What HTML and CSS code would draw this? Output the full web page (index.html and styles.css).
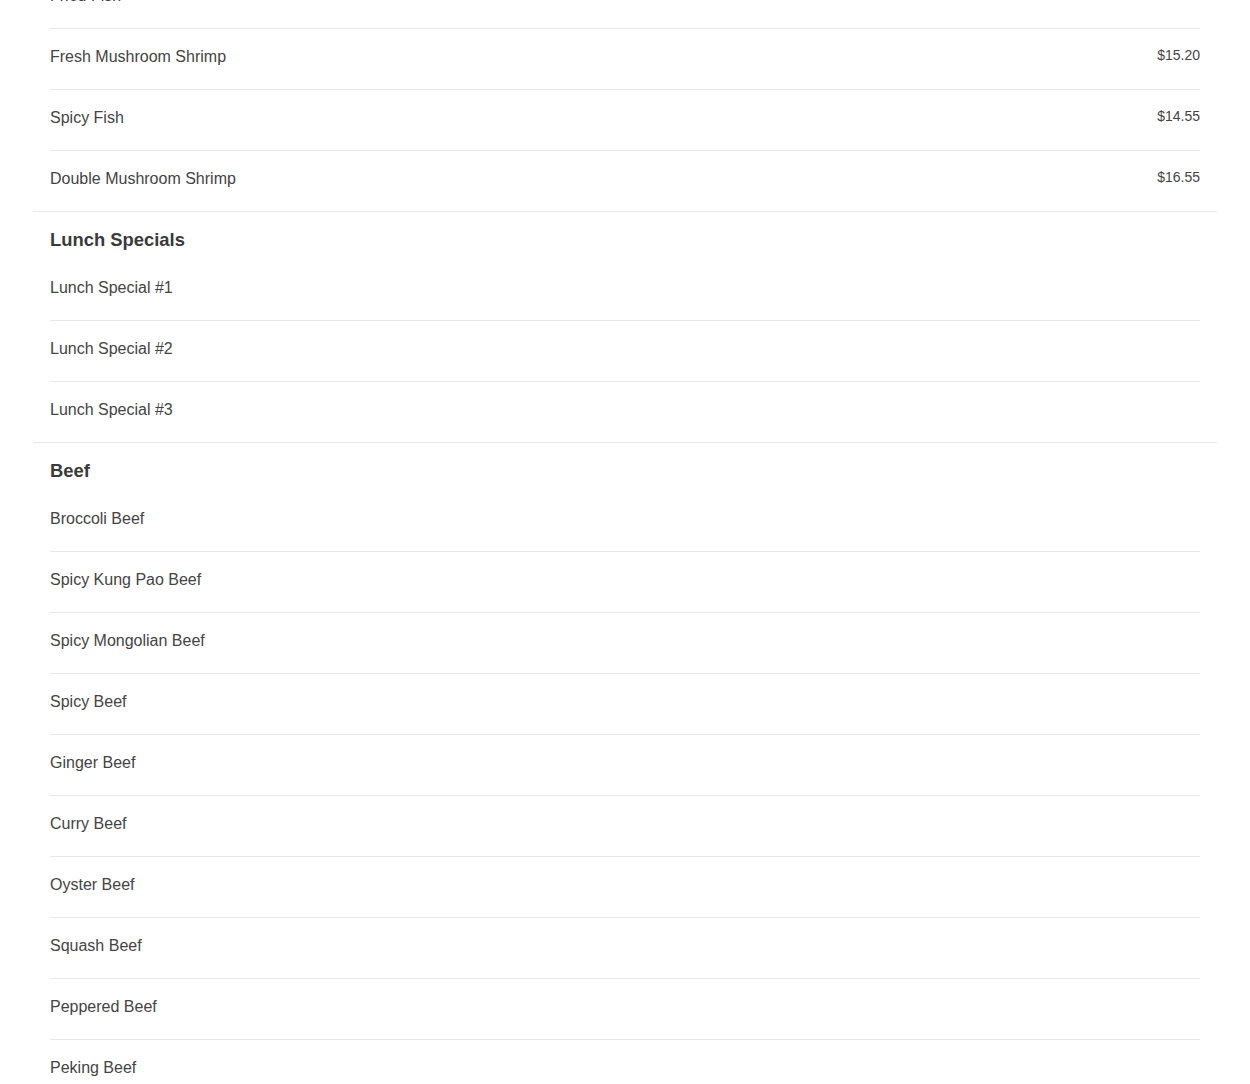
FILE: index.html
```html
<!DOCTYPE html>
<html lang="en">
<head>
  <meta charset="UTF-8" />
  <meta name="viewport" content="width=device-width, initial-scale=1.0"/>
  <title>Menu</title>
  <link rel="stylesheet" href="styles.css">
</head>
<body>
<main class="menu">
  <section class="menu-section">
    <h3>Seafood</h3>
    <div class="item"><span class="name">Fried Fish</span><span class="price">$13.95</span></div>
    <div class="item"><span class="name">Fresh Mushroom Shrimp</span><span class="price">$15.20</span></div>
    <div class="item"><span class="name">Spicy Fish</span><span class="price">$14.55</span></div>
    <div class="item"><span class="name">Double Mushroom Shrimp</span><span class="price">$16.55</span></div>
  </section>

  <section class="menu-section">
    <h3>Lunch Specials</h3>
    <div class="item"><span class="name">Lunch Special #1</span></div>
    <div class="item"><span class="name">Lunch Special #2</span></div>
    <div class="item"><span class="name">Lunch Special #3</span></div>
  </section>

  <section class="menu-section">
    <h3>Beef</h3>
    <div class="item"><span class="name">Broccoli Beef</span></div>
    <div class="item"><span class="name">Spicy Kung Pao Beef</span></div>
    <div class="item"><span class="name">Spicy Mongolian Beef</span></div>
    <div class="item"><span class="name">Spicy Beef</span></div>
    <div class="item"><span class="name">Ginger Beef</span></div>
    <div class="item"><span class="name">Curry Beef</span></div>
    <div class="item"><span class="name">Oyster Beef</span></div>
    <div class="item"><span class="name">Squash Beef</span></div>
    <div class="item"><span class="name">Peppered Beef</span></div>
    <div class="item"><span class="name">Peking Beef</span></div>
  </section>
</main>
</body>
</html>
```

FILE: styles.css
```css
* { box-sizing: border-box; margin: 0; padding: 0; }
body {
  font-family: 'Liberation Sans', Arial, sans-serif;
  background: #fff;
  color: #444;
}
.menu {
  margin: -80px 33px 0;
}
.menu-section {
  padding: 17px 17px 0;
  border-bottom: 1px solid #e8e8e8;
}
.menu-section h3 {
  font-size: 18.4px;
  line-height: 22px;
  font-weight: 700;
  color: #3a3a3a;
  margin-bottom: 9px;
}
.item {
  display: flex;
  justify-content: space-between;
  align-items: flex-start;
  padding: 19px 0 23px;
  border-bottom: 1px solid #e8e8e8;
}
.item:last-child {
  border-bottom: none;
}
.item .name {
  font-size: 16px;
  line-height: 18px;
}
.item .price {
  font-size: 14px;
  line-height: 16px;
  margin-top: -1px;
}
```
